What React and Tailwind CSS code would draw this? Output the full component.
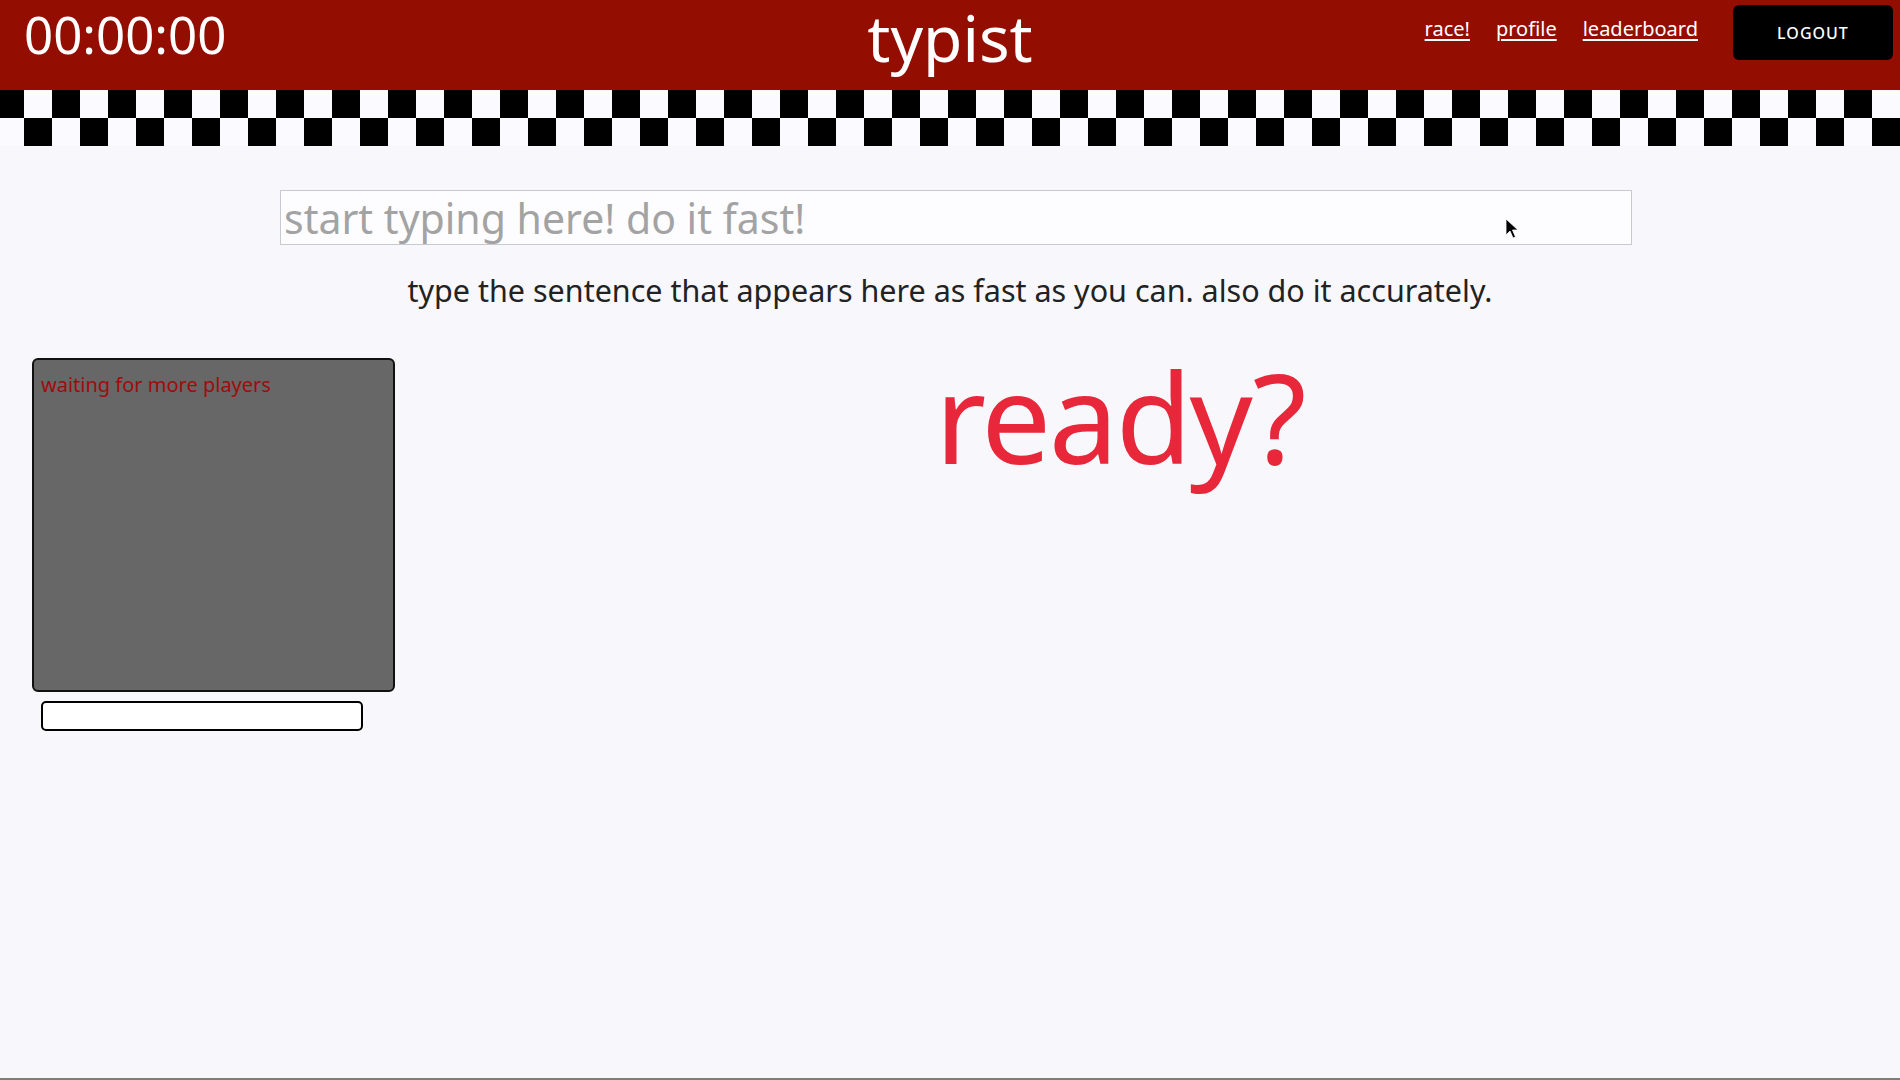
import React from 'react';

const squares = Array.from({ length: 70 }, (_, i) => i);

const Checkers = () => (
  <div className="h-[56px] overflow-hidden bg-[#fbfbff]">
    <div className="flex ml-[-4px]">
      {squares.map((i) => (
        <div key={i} className={`h-[28px] w-[28px] shrink-0 ${i % 2 === 0 ? 'bg-black' : 'bg-[#fbfbff]'}`} />
      ))}
    </div>
    <div className="flex ml-[-4px]">
      {squares.map((i) => (
        <div key={i} className={`h-[28px] w-[28px] shrink-0 ${i % 2 === 0 ? 'bg-[#fbfbff]' : 'bg-black'}`} />
      ))}
    </div>
  </div>
);

const Cursor = () => (
  <svg
    className="absolute left-[1505px] top-[218px]"
    width="16"
    height="22"
    viewBox="0 0 16 22"
  >
    <path d="M1 1 L1 17 L5 13 L8 20 L10.5 19 L7.5 12 L13 12 Z" fill="#000" stroke="#fff" strokeWidth="0.8" />
  </svg>
);

const App = () => {
  return (
    <div
      className="relative h-[1080px] flex flex-col bg-[#f7f7fc] border-b-2 border-[#7d7d72] overflow-hidden"
      style={{ fontFamily: '"Noto Sans", "Open Sans", sans-serif' }}
    >
      {/* Header */}
      <header className="h-[90px] bg-[#930d00] grid grid-cols-3 items-start text-white">
        <div className="pl-[24px] mt-[9px] text-[51px] leading-none">00:00:00</div>
        <div className="text-center text-[64px] leading-[1.2]">typist</div>
        <div className="flex justify-end items-start pr-[7px]">
          <nav className="flex gap-[26px] mt-[19px] text-[20px] leading-none">
            <a href="#" className="underline underline-offset-[3px] decoration-[1.5px]">race!</a>
            <a href="#" className="underline underline-offset-[3px] decoration-[1.5px]">profile</a>
            <a href="#" className="underline underline-offset-[3px] decoration-[1.5px]">leaderboard</a>
          </nav>
          <button className="ml-[35px] mt-[5px] w-[160px] h-[55px] rounded-[6px] bg-black text-white text-[16px] font-medium tracking-[1px]">
            LOGOUT
          </button>
        </div>
      </header>

      <Checkers />

      {/* Typing input */}
      <div className="mt-[44px] ml-[280px] w-[1352px]">
        <input
          type="text"
          placeholder="start typing here! do it fast!"
          className="w-full h-[55px] border border-[#c9c9d2] bg-[#fdfdff] px-[3px] text-[41px] leading-none text-[#333] placeholder:text-[#a3a3a3] outline-none"
        />
      </div>

      <p className="mt-[30px] text-center text-[30.5px] leading-none text-[#222]">
        type the sentence that appears here as fast as you can. also do it accurately.
      </p>

      {/* Race area */}
      <div className="mt-[52px] flex items-start">
        <div className="ml-[32px] w-[363px] shrink-0">
          <div className="h-[334px] rounded-[6px] border-2 border-[#111] bg-[#676767] pt-[14px] pl-[7px]">
            <span className="text-[20px] leading-none text-[#a00c0c]">waiting for more players</span>
          </div>
          <div className="mt-[9px] ml-[9px] w-[322px] h-[30px] rounded-[5px] border-2 border-black bg-white" />
        </div>
        <div className="flex-1 pr-[56px] text-center">
          <h2 className="mt-[-4px] text-[124px] leading-none tracking-[-2.5px] text-[#e8283a]">ready?</h2>
        </div>
      </div>

      <Cursor />
    </div>
  );
};

export default App;
